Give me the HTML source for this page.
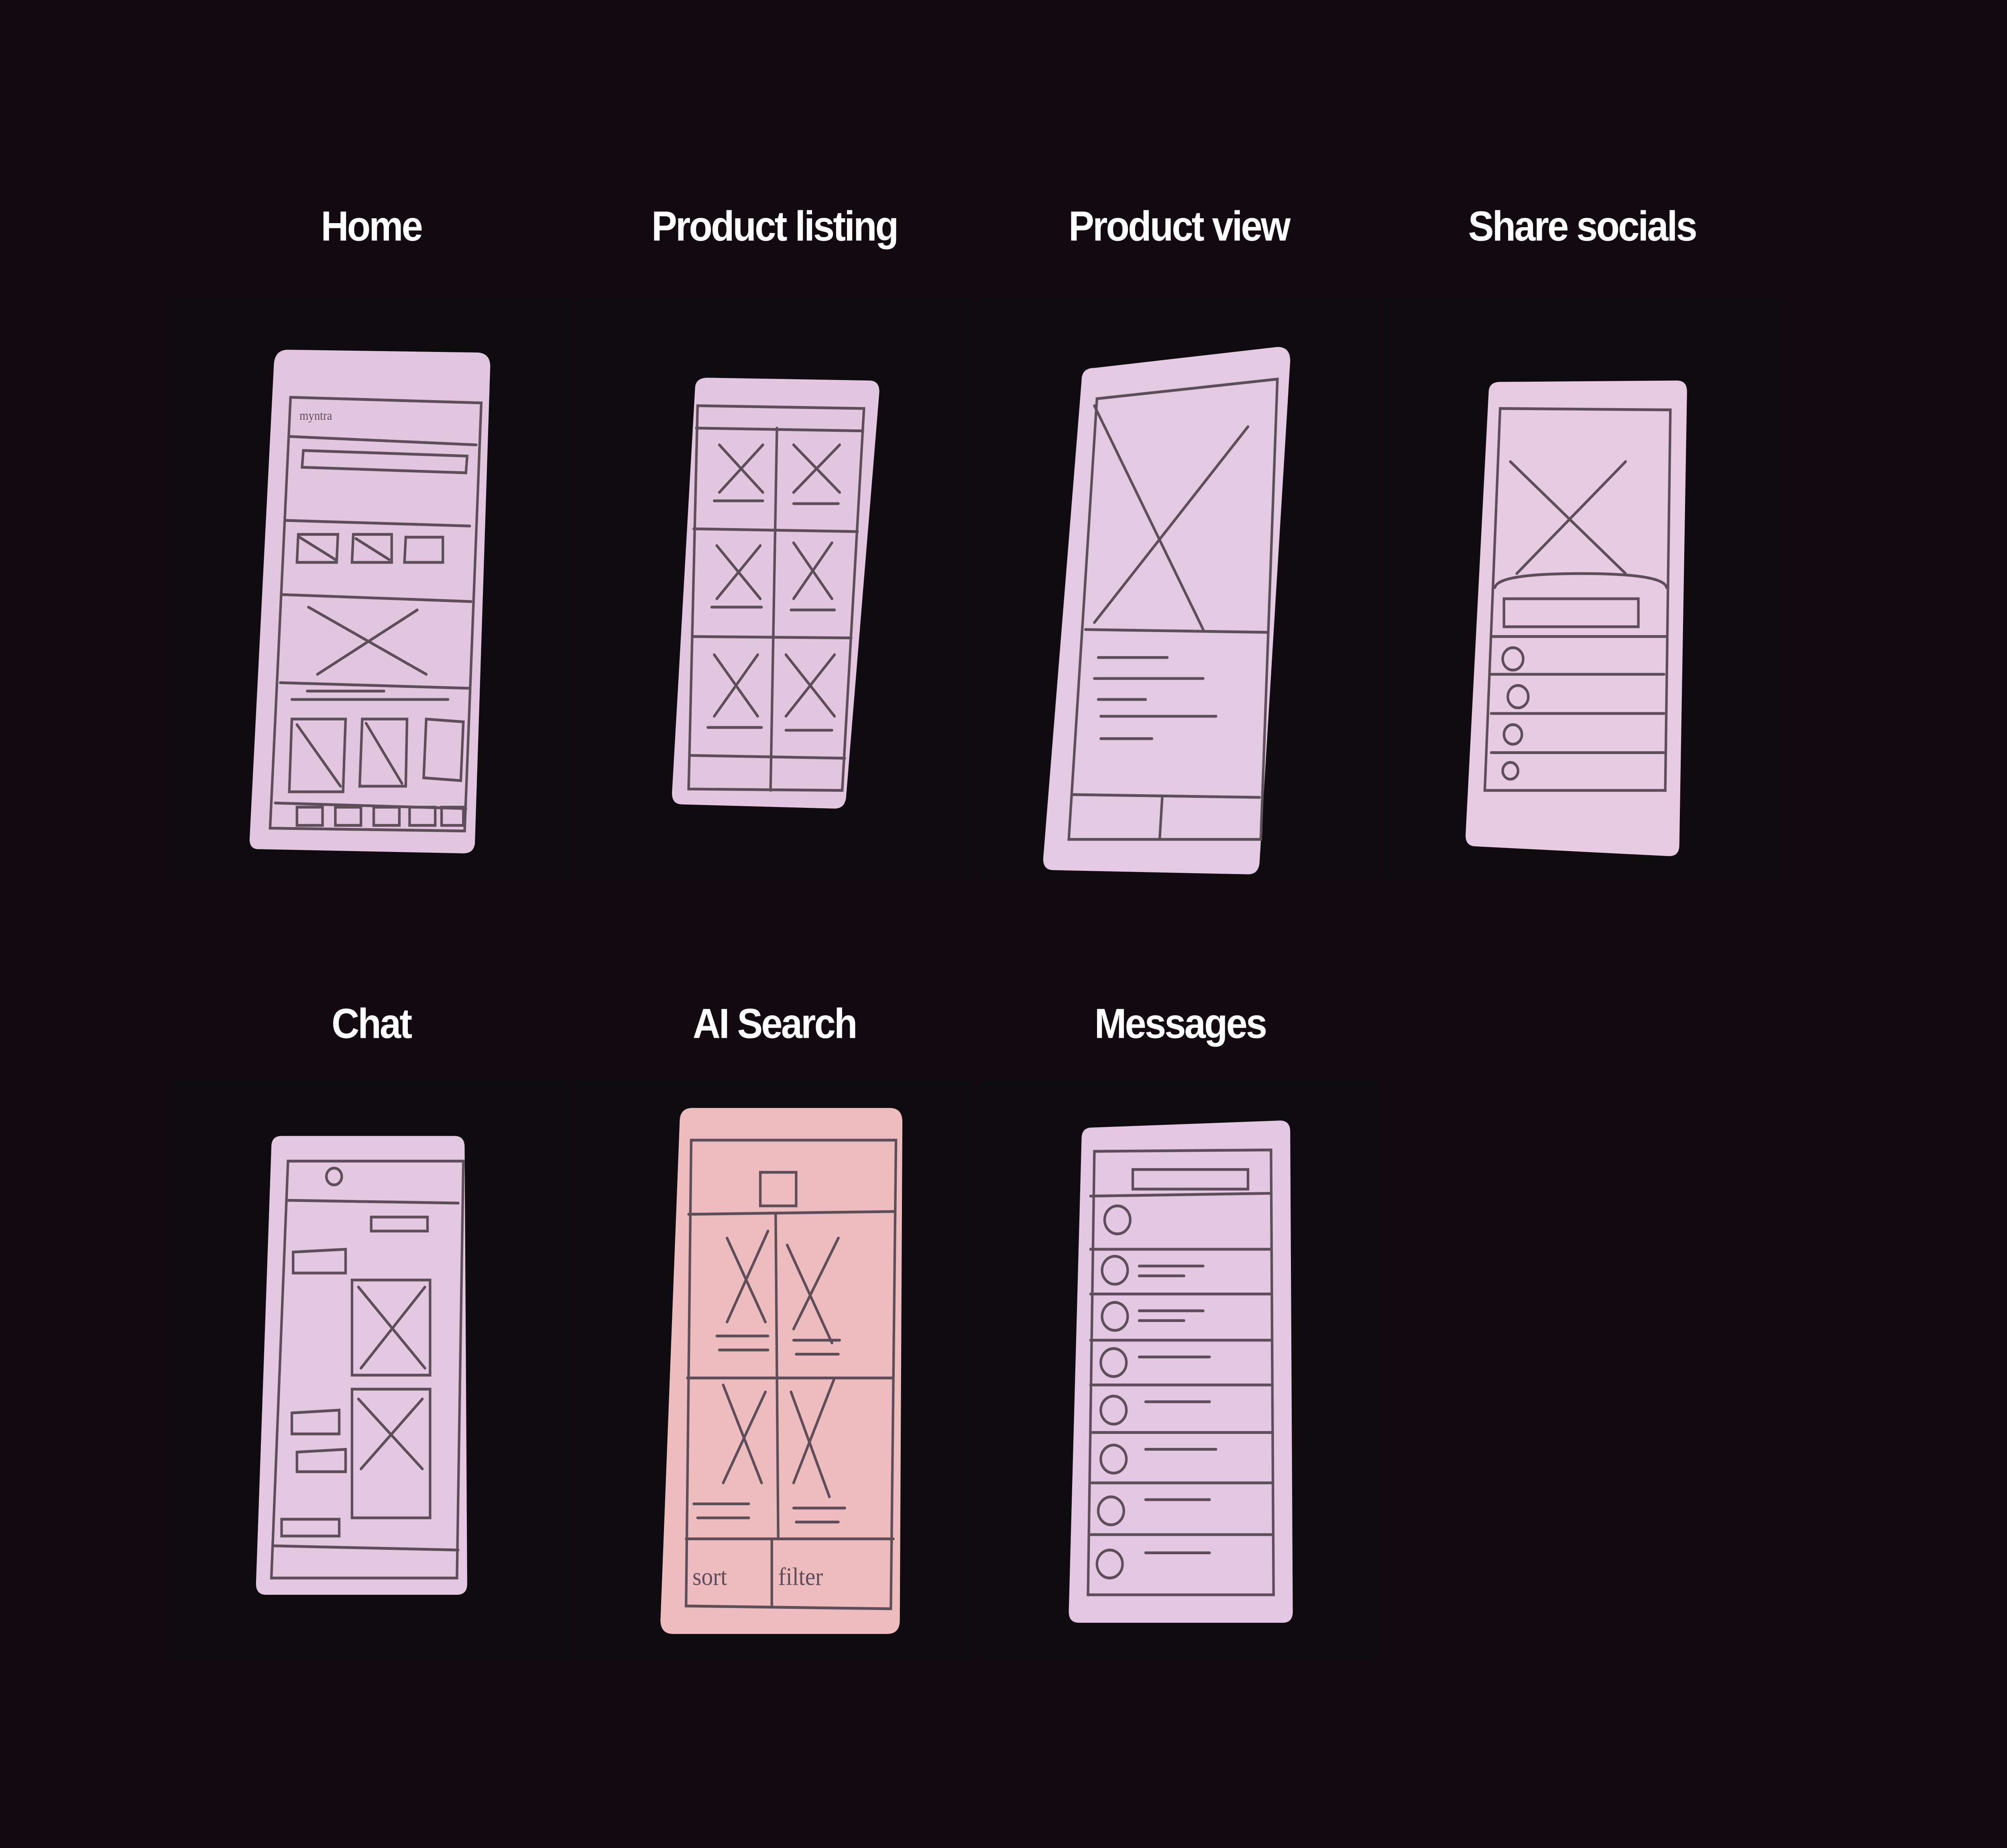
<!DOCTYPE html>
<html><head><meta charset="utf-8"><style>
html,body{margin:0;padding:0;background:#130910;width:100%;height:100%;overflow:hidden;}
svg{display:block;width:100vw;height:100vh;position:absolute;left:0;top:0}
</style></head><body>
<svg xmlns="http://www.w3.org/2000/svg" viewBox="0 0 1568 1321" preserveAspectRatio="none">
<rect width="1568" height="1321" fill="#130910"/>
<g font-family="Liberation Sans, sans-serif" font-size="30" font-weight="bold" fill="#ffffff" text-anchor="middle" letter-spacing="-1.2">
<text x="290" y="172">Home</text>
<text x="605" y="172">Product listing</text>
<text x="921" y="172">Product view</text>
<text x="1236" y="172">Share socials</text>
<text x="290" y="742">Chat</text>
<text x="605" y="742">AI Search</text>
<text x="922" y="742">Messages</text>
</g>
<g fill="#0f0c0f">
<rect x="135" y="213" width="310" height="415"/>
<rect x="449" y="213" width="312" height="415"/>
<rect x="765" y="213" width="311" height="415"/>
<rect x="1080" y="213" width="312" height="415"/>
<rect x="135" y="772" width="310" height="415"/>
<rect x="449" y="772" width="312" height="415"/>
<rect x="765" y="772" width="311" height="415"/>
</g>
<g stroke-linejoin="round">
<path d="M225 250 L374 252 Q383 253 383 262 L371 603 Q370 610 362 610 L202 607 Q195 607 195 600 L214 260 Q215 250 225 250Z" fill="#e2c5df"/>
<path d="M553 270 L679 272 Q687 272 687 280 L661 570 Q660 578 652 578 L533 575 Q525 575 525 567 L543 278 Q543 270 553 270Z" fill="#e3c6df"/>
<path d="M855 263 L998 248 Q1008 248 1008 258 L984 617 Q983 625 975 625 L823 622 Q815 622 815 614 L845 272 Q845 263 855 263Z" fill="#e4c9e2"/>
<path d="M1172 273 L1310 272 Q1318 272 1318 280 L1312 604 Q1312 612 1304 612 L1153 605 Q1145 605 1145 597 L1163 281 Q1163 273 1172 273Z" fill="#e6cbe3"/>
<path d="M220 812 L355 812 Q363 812 363 820 L365 1132 Q365 1140 357 1140 L208 1140 Q200 1140 200 1132 L212 820 Q212 812 220 812Z" fill="#e4c8e2"/>
<path d="M541 792 L695 792 Q705 792 705 802 L703 1158 Q703 1168 693 1168 L526 1168 Q516 1168 516 1158 L531 802 Q531 792 541 792Z" fill="#ecbcbe"/>
<path d="M853 806 L1000 801 Q1008 801 1008 809 L1010 1152 Q1010 1160 1002 1160 L843 1160 Q835 1160 835 1152 L845 814 Q845 806 853 806Z" fill="#e4c7e2"/>
</g>
<g fill="none" stroke="#5e4e5a" stroke-width="2" stroke-linecap="round">
<path d="M227 284 L376 288 L363 594 L211 592 Z M226 312 L372 318 M237 322 L365 326 L364 338 L236 334Z M223 372 L367 376 M233 382 L264 382 L263 402 L232 402Z M234 384 L262 400 M276 382 L306 382 L306 402 L275 402Z M278 385 L304 400 M317 384 L346 384 L346 402 L316 402Z M220 425 L368 430 M219 488 L367 492 M241 434 L333 482 M326 436 L248 482 M228 514 L270 514 L268 566 L226 566Z M232 518 L266 562 M283 514 L318 514 L317 562 L281 562Z M286 517 L314 560 M333 514 L362 516 L360 558 L331 556Z M215 574 L364 578 M232 577 L252 577 L252 590 L232 590Z M262 577 L282 577 L282 590 L262 590Z M292 577 L312 577 L312 590 L292 590Z M320 577 L340 577 L340 590 L320 590Z M345 577 L362 577 L362 590 L345 590Z M240 494 L300 494 M228 500 L350 500"/>
<text x="234" y="300" font-family="Liberation Serif, serif" font-size="9" fill="#5e4e5a" stroke="none">myntra</text>
<path d="M545 290 L675 292 L658 565 L538 564 Z M544 306 L673 308 M607 306 L602 565 M542 378 L670 380 M541 455 L665 456 M540 540 L660 542 M562 318 L596 352 M596 318 L562 352 M620 318 L656 352 M656 318 L620 352 M560 390 L594 428 M594 390 L560 428 M620 388 L650 428 M650 388 L620 428 M558 468 L592 512 M592 468 L558 512 M614 468 L652 512 M652 468 L614 512 M558 358 L596 358 M620 360 L655 360 M556 434 L595 434 M618 436 L652 436 M553 520 L595 520 M614 522 L650 522"/>
<path d="M857 285 L998 271 L985 600 L835 600 Z M848 450 L990 452 M855 290 L940 450 M975 305 L855 445 M838 568 L984 570 M908 570 L906 600 M858 470 L912 470 M855 485 L940 485 M858 500 L895 500 M860 512 L950 512 M860 528 L900 528"/>
<path d="M1172 292 L1305 293 L1301 565 L1160 565Z M1165 455 L1302 455 M1165 482 L1300 482 M1165 510 L1300 510 M1165 538 L1300 538 M1180 330 L1270 410 M1270 330 L1185 410 M1168 420 Q1170 410 1235 410 Q1300 410 1302 420 M1175 428 L1280 428 L1280 448 L1175 448Z"/>
<circle cx="1182" cy="471" r="8"/><circle cx="1186" cy="498" r="8"/><circle cx="1182" cy="525" r="7"/><circle cx="1180" cy="551" r="6"/>
<path d="M225 830 L362 830 L357 1128 L212 1128Z M224 858 L358 860 M290 870 L334 870 L334 880 L290 880Z M229 895 L270 893 L270 910 L229 910Z M275 915 L336 915 L336 983 L275 983Z M280 920 L332 978 M332 920 L282 978 M275 993 L336 993 L336 1085 L275 1085Z M280 1000 L330 1050 M330 1000 L282 1050 M214 1105 L358 1108 M228 1010 L265 1008 L265 1025 L228 1025Z M232 1038 L270 1036 L270 1052 L232 1052Z M220 1086 L265 1086 L265 1098 L220 1098Z"/>
<circle cx="261" cy="841" r="6"/>
<path d="M540 815 L700 815 L696 1150 L536 1148Z M538 868 L699 866 M606 868 L608 1100 M537 985 L698 985 M536 1100 L698 1100 M603 1100 L603 1148 M594 838 L622 838 L622 862 L594 862Z M568 885 L598 945 M600 880 L568 945 M615 890 L650 960 M655 885 L620 950 M565 990 L595 1060 M598 995 L565 1060 M618 995 L648 1070 M652 985 L620 1060 M560 955 L600 955 M562 965 L600 965 M620 958 L656 958 M622 968 L655 968 M542 1075 L585 1075 M545 1085 L585 1085 M620 1078 L660 1078 M622 1088 L655 1088"/>
<text x="541" y="1133" font-family="Liberation Serif, serif" font-size="18" fill="#5e4e5a" stroke="none">sort</text>
<text x="608" y="1133" font-family="Liberation Serif, serif" font-size="18" fill="#5e4e5a" stroke="none">filter</text>
<path d="M855 823 L993 822 L995 1140 L850 1140Z M852 855 L993 853 M852 893 L993 893 M852 925 L993 925 M852 958 L993 958 M852 990 L993 990 M852 1024 L993 1024 M852 1060 L993 1060 M852 1097 L993 1097 M885 836 L975 836 L975 850 L885 850Z M890 905 L940 905 M890 912 L925 912 M890 937 L940 937 M890 944 L925 944 M890 970 L945 970 M895 1002 L945 1002 M895 1036 L950 1036 M895 1072 L945 1072 M895 1110 L945 1110"/>
<circle cx="873" cy="872" r="10"/><circle cx="871" cy="908" r="10"/><circle cx="871" cy="941" r="10"/><circle cx="870" cy="974" r="10"/><circle cx="870" cy="1008" r="10"/><circle cx="870" cy="1043" r="10"/><circle cx="868" cy="1080" r="10"/><circle cx="867" cy="1118" r="10"/>
</g>
</svg>
</body></html>
